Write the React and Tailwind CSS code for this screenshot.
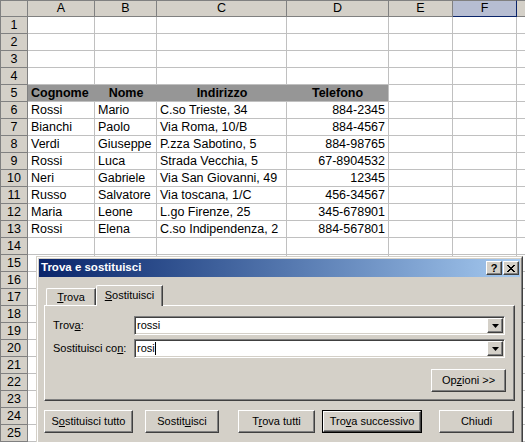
import React from 'react';

const FONT = "font-['Liberation_Sans',Arial,sans-serif]";

const COL_W = ['w-[67px]', 'w-[62px]', 'w-[130px]', 'w-[102px]', 'w-[64px]', 'w-[64px]'];
const LETTERS = ['A', 'B', 'C', 'D', 'E', 'F'];

const HEAD = ['Cognome', 'Nome', 'Indirizzo', 'Telefono'];

const DATA = [
  ['Rossi', 'Mario', 'C.so Trieste, 34', '884-2345'],
  ['Bianchi', 'Paolo', 'Via Roma, 10/B', '884-4567'],
  ['Verdi', 'Giuseppe', 'P.zza Sabotino, 5', '884-98765'],
  ['Rossi', 'Luca', 'Strada Vecchia, 5', '67-8904532'],
  ['Neri', 'Gabriele', 'Via San Giovanni, 49', '12345'],
  ['Russo', 'Salvatore', 'Via toscana, 1/C', '456-34567'],
  ['Maria', 'Leone', 'L.go Firenze, 25', '345-678901'],
  ['Rossi', 'Elena', 'C.so Indipendenza, 2', '884-567801'],
];

const RAISED =
  'bg-[#d4d0c8] border border-t-white border-l-white border-r-[#404040] border-b-[#404040] shadow-[inset_-1px_-1px_#808080]';
const SUNKEN =
  'bg-white border border-t-[#808080] border-l-[#808080] border-r-white border-b-white shadow-[inset_1px_1px_#404040,inset_-1px_-1px_#d4d0c8]';

function RowHeader({ n }) {
  return (
    <div className="w-[28px] h-[17px] shrink-0 bg-[#d4d0c8] border-l border-r border-b border-l-[#808080] border-r-[#808080] border-b-[#808080] text-center leading-[16px]">
      {n}
    </div>
  );
}

function Cell({ w, children, className = '' }) {
  return (
    <div
      className={`${w} h-[17px] shrink-0 border-r border-b border-r-[#c0c0c0] border-b-[#c0c0c0] px-[3px] leading-[16px] whitespace-nowrap overflow-hidden ${className}`}
    >
      {children}
    </div>
  );
}

function SheetRow({ n }) {
  let cells;
  if (n === 5) {
    cells = HEAD.map((h, i) => (
      <div
        key={i}
        className={`${COL_W[i]} h-[17px] shrink-0 bg-[#969696] border-b border-b-[#c0c0c0] px-[3px] leading-[16px] font-bold whitespace-nowrap ${
          i === 0 ? 'text-left' : 'text-center'
        } ${i === 3 ? 'border-r border-r-[#c0c0c0]' : ''}`}
      >
        {h}
      </div>
    ));
    cells.push(<Cell key="e" w={COL_W[4]} />, <Cell key="f" w={COL_W[5]} />);
  } else {
    const row = n >= 6 && n <= 13 ? DATA[n - 6] : null;
    cells = COL_W.map((w, i) => (
      <Cell key={i} w={w} className={i === 3 ? 'text-right' : ''}>
        {row && i < 4 ? row[i] : ''}
      </Cell>
    ));
  }
  return (
    <div className="flex">
      <RowHeader n={n} />
      {cells}
      <div className="flex-1 h-[17px] border-b border-b-[#c0c0c0]" />
    </div>
  );
}

function Btn({ children, className = '' }) {
  return (
    <div className={`${RAISED} h-[23px] flex items-center justify-center shrink-0 ${className}`}>
      <span>{children}</span>
    </div>
  );
}

function DropArrow() {
  return (
    <div className={`${RAISED} w-[16px] h-[15px] flex items-center justify-center shrink-0`}>
      <svg width="7" height="4" viewBox="0 0 7 4">
        <polygon points="0,0 7,0 3.5,4" fill="#000" />
      </svg>
    </div>
  );
}

function Dialog() {
  return (
    <div
      className={`absolute left-[36px] top-[256px] w-[487px] h-[200px] bg-[#d4d0c8] border border-t-[#d4d0c8] border-l-[#d4d0c8] border-r-[#404040] border-b-[#404040] text-[11px] text-black ${FONT}`}
    >
      <div className="h-full border border-t-white border-l-white border-r-[#808080] border-b-[#808080] p-[1px]">
        {/* Title bar */}
        <div className="h-[18px] flex items-center pl-[2px] pr-[1px] bg-gradient-to-r from-[#0a246a] to-[#a6caf0]">
          <span className="text-white font-bold text-[11.5px]">Trova e sostituisci</span>
          <div className="ml-auto flex gap-[1px]">
            <div className={`${RAISED} w-[16px] h-[14px] flex items-center justify-center font-bold text-[11px] leading-none`}>
              ?
            </div>
            <div className={`${RAISED} w-[16px] h-[14px] flex items-center justify-center`}>
              <svg width="8" height="7" viewBox="0 0 8 7" shapeRendering="crispEdges">
                <path d="M0 0h2v1h1v1h2v-1h1v-1h2v1h-1v1h-1v1h-1v1h1v1h1v1h1v1h-2v-1h-1v-1h-2v1h-1v1h-2v-1h1v-1h1v-1h1v-1h-1v-1h-1v-1h-1z" fill="#000" />
              </svg>
            </div>
          </div>
        </div>

        {/* Body */}
        <div className="px-[5px] pt-[8px]">
          {/* Tabs */}
          <div className="flex items-end h-[20px] pl-[2px]">
            <div className="w-[50px] h-[17px] border-t border-l border-r border-t-white border-l-white border-r-[#404040] rounded-tl-[2px] shadow-[inset_-1px_0_#808080] flex items-center justify-center">
              <span>
                <span className="underline">T</span>rova
              </span>
            </div>
            <div className="relative z-10 w-[67px] h-[21px] -mb-[1px] bg-[#d4d0c8] border-t border-l border-r border-t-white border-l-white border-r-[#404040] rounded-tl-[2px] shadow-[inset_-1px_0_#808080] flex items-center justify-center pb-[1px]">
              <span>
                <span className="underline">S</span>ostituisci
              </span>
            </div>
          </div>

          {/* Panel */}
          <div className={`${RAISED} w-[471px] h-[96px] flex flex-col pl-[8px] pt-[10px]`}>
            <div className="flex items-center h-[19px]">
              <span className="w-[81px]">
                Trov<span className="underline">a</span>:
              </span>
              <div className={`${SUNKEN} w-[371px] h-[19px] flex items-center pl-[2px] pr-[1px]`}>
                <span className="flex-1">rossi</span>
                <DropArrow />
              </div>
            </div>
            <div className="flex items-center h-[19px] mt-[4px]">
              <span className="w-[81px]">
                Sostituisci co<span className="underline">n</span>:
              </span>
              <div className={`${SUNKEN} w-[371px] h-[19px] flex items-center pl-[2px] pr-[1px]`}>
                <span>rosi</span>
                <span className="w-[1px] h-[13px] bg-black" />
                <span className="flex-1" />
                <DropArrow />
              </div>
            </div>
            <div className="self-end mr-[8px] mt-[11px]">
              <Btn className="w-[75px] h-[21px]">
                Op<span className="underline">z</span>ioni &gt;&gt;
              </Btn>
            </div>
          </div>

          {/* Buttons */}
          <div className="flex mt-[9px]">
            <Btn className="w-[89px]">
              S<span className="underline">o</span>stituisci tutto
            </Btn>
            <Btn className="w-[74px] ml-[12px]">
              Sostit<span className="underline">u</span>isci
            </Btn>
            <Btn className="w-[77px] ml-[19px]">
              T<span className="underline">r</span>ova tutti
            </Btn>
            <div className="ml-[7px] w-[100px] h-[23px] border border-black">
              <div className={`${RAISED} h-full flex items-center justify-center`}>
                <span>
                  Tro<span className="underline">v</span>a successivo
                </span>
              </div>
            </div>
            <Btn className="w-[75px] ml-[17px]">Chiudi</Btn>
          </div>
        </div>
      </div>
    </div>
  );
}

export default function App() {
  const rows = Array.from({ length: 25 }, (_, i) => i + 1);
  return (
    <div className={`relative w-[525px] h-[442px] overflow-hidden bg-white text-[12.5px] text-black ${FONT}`}>
      {/* Column headers */}
      <div className="flex">
        <div className="w-[28px] h-[17px] shrink-0 bg-[#d4d0c8] border-l border-t border-r border-b border-[#808080]" />
        {LETTERS.map((l, i) => (
          <div
            key={l}
            className={`${COL_W[i]} h-[17px] shrink-0 border-t border-r border-b text-center leading-[15px] ${
              l === 'F'
                ? 'bg-[#b6bdd2] border-t-[#808080] border-r-[#0a246a] border-b-[#0a246a]'
                : 'bg-[#d4d0c8] border-t-[#808080] border-r-[#808080] border-b-[#808080]'
            }`}
          >
            {l}
          </div>
        ))}
        <div className="flex-1 h-[17px] bg-[#d4d0c8] border-t border-b border-t-[#808080] border-b-[#808080]" />
      </div>
      {rows.map((n) => (
        <SheetRow key={n} n={n} />
      ))}
      <Dialog />
    </div>
  );
}
